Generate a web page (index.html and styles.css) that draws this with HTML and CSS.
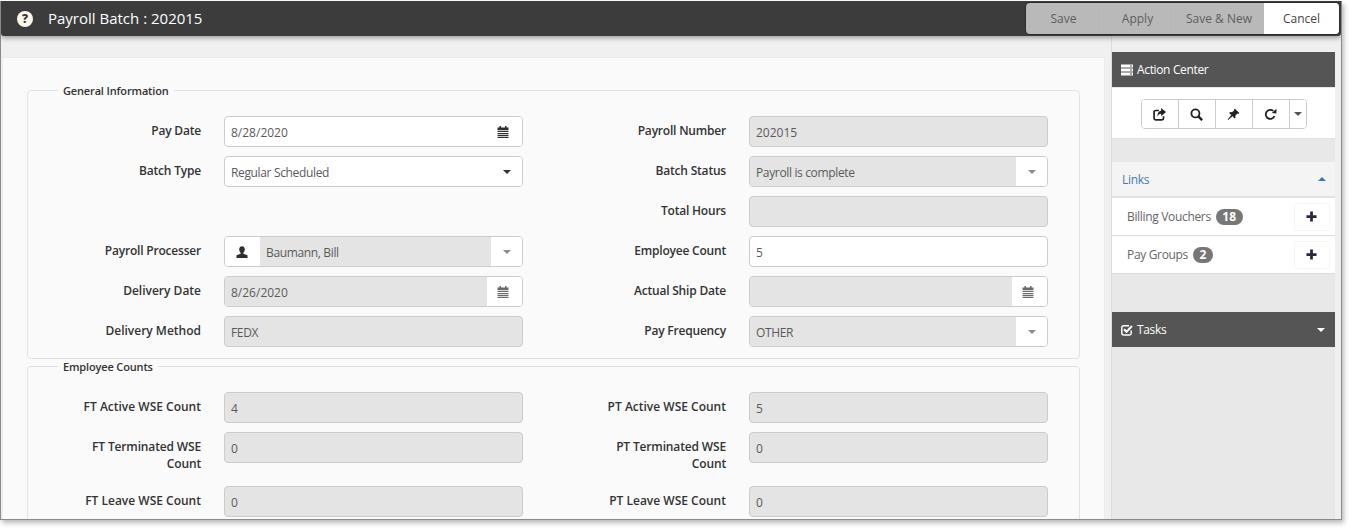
FILE: index.html
```html
<!DOCTYPE html>
<html lang="en">
<head>
<meta charset="utf-8">
<title>Payroll Batch : 202015</title>
<link rel="stylesheet" href="styles.css">
</head>
<body>
<svg class="defs" width="0" height="0" aria-hidden="true">
  <symbol id="cal" viewBox="0 0 12 12">
    <path d="M2.500 0h1.500v1.500h4V0h1.500v1.500H11.500v2.500H.5V1.500h2zM.5 4.800h11v1.300H.5zM.5 6.900h11v1.300H.5zM.5 9h11v1.300H.5zM.5 11h11v1H.5z"/>
  </symbol>
  <symbol id="user" viewBox="0 0 12 12">
    <path d="M6 .2c-1.900 0-2.800 1.400-2.800 3.100 0 1.400.6 2.600 1.400 3.200v1.200L.5 9.300V12h11V9.300L7.400 7.700V6.500c.8-.6 1.400-1.800 1.400-3.200C8.800 1.600 7.900.2 6 .2z"/>
  </symbol>
  <symbol id="plus" viewBox="0 0 12 12">
    <path d="M4.500 .5h3v4h4v3h-4v4h-3v-4h-4v-3h4z"/>
  </symbol>
</svg>
<div class="window">
  <header class="topbar">
    <div class="title-wrap">
      <span class="help">?</span>
      <h1 class="title">Payroll Batch : 202015</h1>
    </div>
    <div class="actions">
      <button class="act act-save">Save</button>
      <button class="act act-apply">Apply</button>
      <button class="act act-new">Save &amp; New</button>
      <button class="act act-cancel">Cancel</button>
    </div>
  </header>
  <div class="body">
    <main class="main">
      <section class="card">
        <fieldset class="group">
          <legend>General Information</legend>
          <div class="form">
            <label class="lbl">Pay Date</label>
            <div class="field"><span class="val">8/28/2020</span><span class="addon cal-on cal-shift"><svg class="ico dark"><use href="#cal"/></svg></span></div>
            <label class="lbl">Payroll Number</label>
            <div class="field off"><span class="val">202015</span></div>

            <label class="lbl">Batch Type</label>
            <div class="field"><span class="val txt">Regular Scheduled</span><span class="addon"><i class="caret"></i></span></div>
            <label class="lbl">Batch Status</label>
            <div class="field"><span class="val off txt">Payroll is complete</span><span class="addon"><i class="caret muted"></i></span></div>

            <div class="spacer"></div>
            <label class="lbl">Total Hours</label>
            <div class="field off"></div>

            <label class="lbl">Payroll Processer</label>
            <div class="field"><span class="addon addon-left"><svg class="ico dark"><use href="#user"/></svg></span><span class="val off txt">Baumann, Bill</span><span class="addon"><i class="caret muted"></i></span></div>
            <label class="lbl">Employee Count</label>
            <div class="field"><span class="val">5</span></div>

            <label class="lbl lbl-wide">Delivery Date</label>
            <div class="field"><span class="val off">8/26/2020</span><span class="addon cal-on cal-shift"><svg class="ico gray"><use href="#cal"/></svg></span></div>
            <label class="lbl">Actual Ship Date</label>
            <div class="field"><span class="val off"></span><span class="addon cal-on cal-shift"><svg class="ico gray"><use href="#cal"/></svg></span></div>

            <label class="lbl lbl-wide">Delivery Method</label>
            <div class="field off"><span class="val txt">FEDX</span></div>
            <label class="lbl">Pay Frequency</label>
            <div class="field"><span class="val off txt">OTHER</span><span class="addon"><i class="caret muted"></i></span></div>
          </div>
        </fieldset>
        <fieldset class="group group-next">
          <legend>Employee Counts</legend>
          <div class="form">
            <label class="lbl lbl-wide">FT Active WSE Count</label>
            <div class="field off"><span class="val">4</span></div>
            <label class="lbl lbl-wide">PT Active WSE Count</label>
            <div class="field off"><span class="val">5</span></div>

            <label class="lbl lbl-term">FT Terminated WSE Count</label>
            <div class="field off"><span class="val">0</span></div>
            <label class="lbl lbl-term">PT Terminated WSE Count</label>
            <div class="field off"><span class="val">0</span></div>

            <label class="lbl lbl-wide">FT Leave WSE Count</label>
            <div class="field off"><span class="val">0</span></div>
            <label class="lbl lbl-wide">PT Leave WSE Count</label>
            <div class="field off"><span class="val">0</span></div>
          </div>
        </fieldset>
      </section>
    </main>
    <aside class="side">
      <div class="panel">
        <div class="panel-head">
          <svg class="head-ico" viewBox="0 0 12 11"><path fill="#fff" d="M0 0h12v3H0zM0 4h12v3H0zM0 8h12v3H0z"/><path fill="#555" d="M9 1h2v1H9zM9 5h2v1H9zM9 9h2v1H9z"/></svg>
          <span>Action Center</span>
        </div>
        <div class="tools">
          <div class="tool-group">
            <button class="tool" aria-label="Open"><svg class="tool-ico" viewBox="0 0 12 12"><path fill="none" stroke="#222" stroke-width="1.600" d="M5.500 2.300H2.500a1.500 1.500 0 0 0-1.500 1.500v5.700a1.500 1.500 0 0 0 1.500 1.500h5.700a1.500 1.500 0 0 0 1.500-1.500V7.500"/><path fill="#222" d="M7.500 0l4.500 3.700-4.500 3.800V5.300C5.800 5.300 4.700 6.300 4 8c0-3.300 1.300-5.300 3.500-5.500z"/></svg></button>
            <button class="tool" aria-label="Search"><svg class="tool-ico" viewBox="0 0 12 12"><circle cx="5" cy="5" r="3.700" fill="none" stroke="#222" stroke-width="1.700"/><path d="M7.700 7.700l3.500 3.500" stroke="#222" stroke-width="2.200"/></svg></button>
            <button class="tool" aria-label="Pin"><svg class="tool-ico" viewBox="0 0 12 12"><path fill="#222" d="M7.300.6l4.100 4.100-1 .8-.8-.4-2 2.100.3 1.700-.8.800-2-2-4 3.400-.5-.5L4 6.500l-2-2 .8-.8 1.800.3L6.700 2l-.3-.6z"/></svg></button>
            <button class="tool" aria-label="Refresh"><svg class="tool-ico" viewBox="0 0 12 12"><path fill="none" stroke="#222" stroke-width="1.700" d="M9.700 7.600A4.200 4.200 0 1 1 8.600 2.700"/><path fill="#222" d="M7.200 4.500L11.500 5V.8z"/></svg></button>
            <button class="tool tool-caret" aria-label="More"><i class="caret muted-dark"></i></button>
          </div>
        </div>
        <div class="gap-a"></div>
        <div class="links-head">
          <span>Links</span>
          <i class="caret-up"></i>
        </div>
        <div class="link-row">
          <span class="link-name">Billing Vouchers</span><span class="badge">18</span>
          <button class="add" aria-label="Add billing voucher"><svg class="plus"><use href="#plus"/></svg></button>
        </div>
        <div class="link-row">
          <span class="link-name">Pay Groups</span><span class="badge">2</span>
          <button class="add" aria-label="Add pay group"><svg class="plus"><use href="#plus"/></svg></button>
        </div>
        <div class="gap-b"></div>
        <div class="panel-head tasks-head">
          <svg class="head-ico" viewBox="0 0 12 12"><path fill="none" stroke="#fff" stroke-width="1.500" d="M10.200 6.500v2.800a1.700 1.700 0 0 1-1.700 1.700H2.500A1.700 1.700 0 0 1 .8 9.300V3.500a1.700 1.700 0 0 1 1.700-1.700h5.500"/><path fill="none" stroke="#fff" stroke-width="2" d="M3 5.200l2.500 2.500L11 2"/></svg>
          <span>Tasks</span>
          <i class="caret white"></i>
        </div>
      </div>
    </aside>
  </div>
</div>
</body>
</html>
```
FILE: styles.css
```css
* { box-sizing: border-box; }
html, body { margin: 0; height: 530px; overflow: hidden; background: #fff; }
body { font-family: "Open Sans", sans-serif; font-size: 12px; color: #333; }
.defs { position: absolute; }

.window {
  width: 1342px;
  height: 519px;
  margin-top: 1px;
  border: 1px solid #8a8a8a;
  border-top: 0;
  display: flex;
  flex-direction: column;
  overflow: hidden;
  background: #f0f0f0;
  box-shadow: 2px 3px 5px rgba(0,0,0,.28);
}

.topbar {
  flex: 0 0 35px;
  height: 35px;
  background: #3c3c3c;
  border-radius: 0 0 3px 3px;
  display: flex;
  align-items: center;
  justify-content: space-between;
  padding: 0 2px 0 16px;
  position: relative;
  z-index: 2;
  box-shadow: 0 2px 5px rgba(0,0,0,.35);
}
.title-wrap { display: flex; align-items: center; gap: 15px; }
.help {
  width: 16px; height: 16px; border-radius: 50%;
  background: #fdf8ec; color: #3c3c3c;
  font-weight: 800; font-size: 12px; line-height: 16px; text-align: center;
}
.title { margin: 0 0 2px; font-size: 15px; font-weight: 400; color: #fff; line-height: 20px; }

.actions {
  display: flex;
  width: 313px; height: 31px;
  margin-top: -1px;
  background: #b9b9b9;
  border-radius: 4px;
  overflow: hidden;
  box-shadow: 0 0 0 1px #2c2c2c;
}
.act {
  border: 0; margin: 0; padding: 0;
  background: transparent;
  font: 400 12px "Open Sans", sans-serif;
  color: #5e5e5e;
  border-right: 1px solid #bcbcbc;
}
.act-save { width: 76px; }
.act-apply { width: 72px; }
.act-new { width: 90px; border-right: 0; }
.act-cancel { width: 75px; background: #fff; color: #444; border-right: 0; }

.body { flex: 1; display: flex; min-height: 0; }
.main { width: 1110px; padding: 21px 6px 0 1px; overflow: hidden; }
.card {
  height: 100%;
  background: #fafafa;
  border: 1px solid #ececec;
  border-bottom: 0;
  padding: 24px 24px 0 24px;
}

.group {
  margin: 0;
  padding: 17px 0 11px;
  min-width: 0;
  border: 1px solid #e2e2e2;
  border-radius: 4px;
}
.group-next { margin-top: -1px; }
.group legend {
  margin-left: 30px;
  padding: 0 5px;
  height: 17px;
  font-size: 11px;
  font-weight: 600;
  line-height: 17px;
  letter-spacing: -.15px;
  color: #333;
}

.form {
  display: grid;
  grid-template-columns: 196px 299px 226px 299px;
  row-gap: 9px;
  align-items: start;
}
.spacer { grid-column: span 2; }
.lbl {
  justify-self: end;
  max-width: 150px;
  padding: 6px 23px 5px 0;
  font-weight: 600;
  font-size: 12px;
  line-height: 17px;
  letter-spacing: -.2px;
  text-align: right;
  color: #333;
}
.lbl-wide { letter-spacing: 0; }
.lbl-term { letter-spacing: -.15px; }
.field {
  height: 31px;
  display: flex;
  background: #fff;
  border: 1px solid #ccc;
  border-radius: 4px;
  overflow: hidden;
}
.field.off { background: #e4e4e4; }
.val {
  flex: 1;
  padding: 0 6px;
  line-height: 31px;
  color: #5a5a5a;
  white-space: nowrap;
}
.val.off { background: #e4e4e4; }
.val.txt { letter-spacing: -.35px; }
.addon {
  flex: 0 0 31px;
  display: flex;
  align-items: center;
  justify-content: center;
  background: #fff;
}
.cal-on { flex-basis: 35px; }
.cal-shift { padding-right: 3px; }
.addon-left { flex-basis: 35px; padding-right: 2px; }

.ico { width: 12px; height: 12px; }
.ico.dark { fill: #2e2e2e; }
.ico.gray { fill: #6a6a6a; }

.caret {
  display: block; width: 0; height: 0;
  border-left: 4px solid transparent;
  border-right: 4px solid transparent;
  border-top: 4px solid #333;
}
.caret.muted { border-top-color: #8c8c8c; }
.caret.muted-dark { border-top-color: #555; }
.caret.white { border-top-color: #fff; margin-left: auto; margin-right: 10px; }
.caret-up {
  display: block; width: 0; height: 0;
  border-left: 4px solid transparent;
  border-right: 4px solid transparent;
  border-bottom: 4px solid #337ab7;
}

.side {
  width: 230px;
  border-left: 1px solid #dcdcdc;
  background: #efefef;
  padding: 16px 6px 0 0;
}
.panel {
  height: 100%;
  background: #e8e8e8;
  display: flex;
  flex-direction: column;
}
.panel-head {
  flex: 0 0 35px;
  background: #555;
  color: #fff;
  display: flex;
  align-items: center;
  gap: 4px;
  padding-left: 9px;
  font-size: 12px;
  font-weight: 400;
  letter-spacing: -.35px;
}
.head-ico { width: 12px; height: 12px; flex: none; }
.tools {
  margin-top: 1px;
  height: 51px;
  background: #fff;
  display: flex;
  justify-content: center;
  padding-top: 11px;
  border-bottom: 1px solid #e2e2e2;
}
.tool-group {
  display: flex;
  height: 30px;
  border: 1px solid #ccc;
  border-radius: 4px;
  overflow: hidden;
  background: #fff;
}
.tool {
  width: 37px; height: 100%;
  border: 0; border-right: 1px solid #ccc;
  background: #fff; padding: 0;
  display: flex; align-items: center; justify-content: center;
}
.tool-caret { width: 16px; border-right: 0; }
.tool-ico { width: 13px; height: 13px; }

.gap-a { flex: 0 0 23px; }
.links-head {
  flex: 0 0 36px;
  background: #f4f4f4;
  border-bottom: 2px solid #e2e2e2;
  display: flex;
  align-items: center;
  justify-content: space-between;
  padding: 0 9px 0 10px;
  color: #4a78b4;
  font-size: 12px;
  letter-spacing: -.3px;
}
.link-row {
  flex: 0 0 38px;
  background: #fff;
  border-bottom: 1px solid #dcdcdc;
  display: flex;
  align-items: center;
  padding: 0 5px 0 15px;
}
.link-name { color: #666; letter-spacing: -.33px; }
.badge {
  margin-left: 5px;
  min-width: 20px;
  padding: 0 6.5px;
  height: 16px;
  border-radius: 8px;
  background: #777;
  color: #fff;
  font-size: 12px;
  font-weight: 700;
  line-height: 16px;
  text-align: center;
}
.add {
  margin-left: auto;
  width: 36px; height: 28px;
  padding: 0 1px 0 0;
  background: #fff;
  border: 1px solid #f4f4f4;
  border-radius: 3px;
  display: flex; align-items: center; justify-content: center;
}
.plus { width: 11px; height: 11px; fill: #2f2438; }
.gap-b { flex: 0 0 38px; }
```
